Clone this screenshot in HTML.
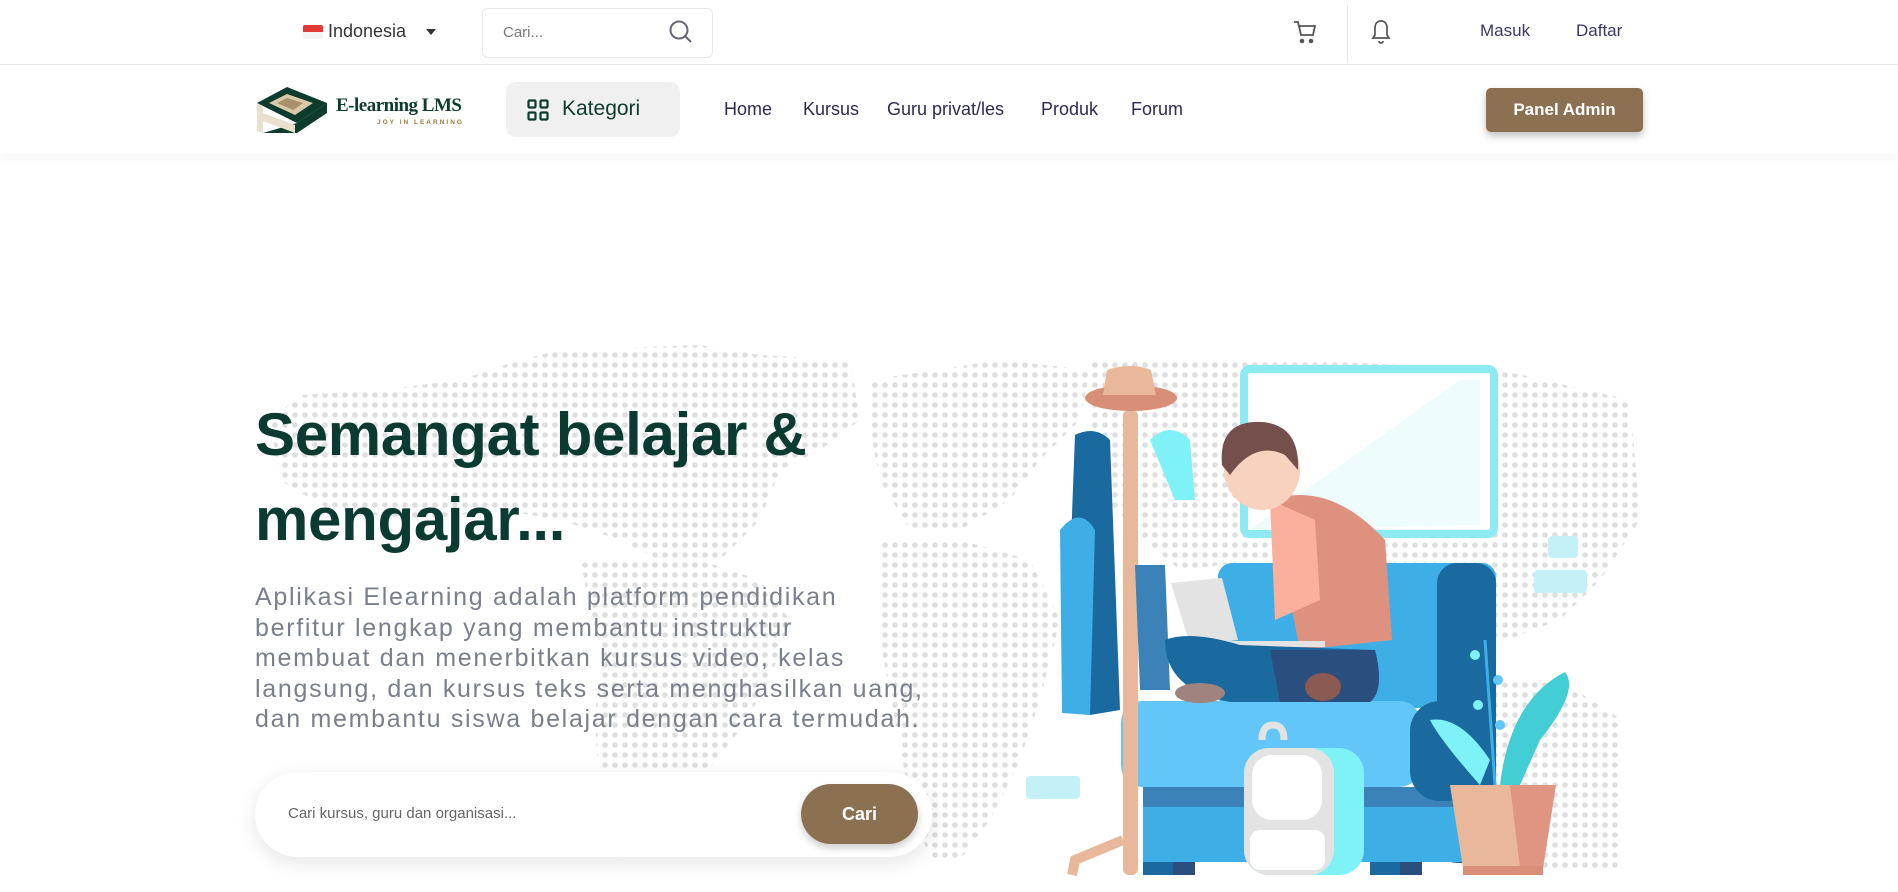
<!DOCTYPE html>
<html><head><meta charset="utf-8">
<style>
*{margin:0;padding:0;box-sizing:border-box}
body{width:1898px;height:892px;overflow:hidden;background:#fff;font-family:"Liberation Sans",sans-serif;position:relative}
.a{position:absolute}
.top{left:0;top:0;width:1898px;height:65px;border-bottom:1px solid #e6e6e6}
.nav{left:0;top:65px;width:1898px;height:89px;box-shadow:0 6px 10px rgba(0,0,0,0.03)}
.navlink{top:99px;font-size:18px;color:#2e2a52}
h1{position:absolute;left:255px;top:392px;font-size:60px;line-height:85px;color:#0b3b30;font-weight:700;letter-spacing:-0.3px}
.p{left:255px;top:582px;width:760px;font-size:25px;line-height:30.6px;color:#7a7f8c;letter-spacing:1.7px;white-space:nowrap}
</style></head><body>
<svg class="a" style="left:0;top:0" width="1898" height="892">
<defs>
<pattern id="d" width="10" height="10" patternUnits="userSpaceOnUse"><circle cx="5" cy="5" r="2.8" fill="#dedede"/></pattern>
</defs>
<g fill="url(#d)">
<polygon points="560,350 700,345 760,355 850,360 860,420 820,450 780,470 760,520 720,560 660,560 620,540 560,520 500,510 420,520 330,510 280,480 270,420 300,395 380,390 460,380 520,360"/>
<polygon points="580,560 700,560 760,580 790,620 770,680 740,730 700,780 660,830 620,860 600,800 595,720 600,650"/>
<polygon points="870,380 1000,360 1090,370 1080,420 1040,460 1010,500 960,530 910,530 880,480 870,430"/>
<polygon points="880,540 960,540 1030,560 1060,620 1040,700 1020,760 990,820 960,860 930,860 910,800 895,720 880,640"/>
<polygon points="1090,360 1300,360 1500,370 1630,400 1640,520 1600,580 1560,620 1480,650 1400,620 1330,580 1260,560 1180,570 1120,520 1090,460"/>
<polygon points="1460,680 1560,680 1622,720 1622,870 1480,870 1440,780"/>
</g>
</svg>

<div class="a top"></div>
<div class="a" style="left:303px;top:25px;width:20px;height:14px;background:linear-gradient(#e53935 50%,#f4f4f4 50%);border-radius:2px"></div>
<div class="a" style="left:328px;top:21px;font-size:18px;color:#333">Indonesia</div>
<div class="a" style="left:426px;top:29px;width:0;height:0;border-left:5px solid transparent;border-right:5px solid transparent;border-top:6px solid #333"></div>
<div class="a" style="left:482px;top:8px;width:231px;height:50px;border:1px solid #e8e8e8;border-radius:6px"></div>
<div class="a" style="left:503px;top:24px;font-size:15px;color:#777">Cari...</div>
<svg class="a" style="left:668px;top:19px" width="26" height="26" viewBox="0 0 26 26"><circle cx="11" cy="11" r="8.5" fill="none" stroke="#667" stroke-width="2"/><line x1="17.5" y1="17.5" x2="23" y2="23" stroke="#667" stroke-width="2"/></svg>
<svg class="a" style="left:1292px;top:19px" width="26" height="26" viewBox="0 0 26 26" fill="none" stroke="#555" stroke-width="1.8"><path d="M2 3h4l3 13h12l2-9H7"/><circle cx="10" cy="22" r="1.4" fill="#555"/><circle cx="19" cy="22" r="1.4" fill="#555"/></svg>
<div class="a" style="left:1347px;top:5px;width:1px;height:57px;background:#e6e6e6"></div>
<svg class="a" style="left:1370px;top:19px" width="22" height="26" viewBox="0 0 22 26" fill="none" stroke="#555" stroke-width="1.7"><path d="M11 2c-4 0-6 3-6 7v7l-2 3h16l-2-3V9c0-4-2-7-6-7z"/><path d="M9 22c0 1.5 1 2 2 2s2-.5 2-2"/></svg>
<div class="a" style="left:1480px;top:21px;font-size:17px;color:#3a3763">Masuk</div>
<div class="a" style="left:1576px;top:21px;font-size:17px;color:#3a3763">Daftar</div>

<div class="a nav"></div>
<svg class="a" style="left:255px;top:85px" width="80" height="50" viewBox="0 0 80 50"><polygon points="2,18 32,2 72,18 42,38" fill="#0d3b2e"/><polygon points="14,18 32,9 58,18 40,30" fill="#d9c9a8"/><polygon points="22,18 32,13 48,18 38,25" fill="#a8916b"/><polygon points="2,18 2,46 8,48 8,22" fill="#e8dfcc"/><polygon points="8,48 42,38 72,18 72,28 42,48" fill="#0d3b2e"/><polygon points="8,36 40,48 40,40 8,28" fill="#e8dfcc"/></svg>
<div class="a" style="left:336px;top:95px;font-family:'Liberation Serif',serif;font-weight:700;font-size:19px;color:#0d3b2e;letter-spacing:-0.5px">E-learning LMS</div>
<div class="a" style="left:377px;top:119px;font-size:6.5px;color:#a07a3a;letter-spacing:2px;font-weight:700">JOY IN LEARNING</div>
<div class="a" style="left:506px;top:82px;width:174px;height:55px;background:#f0f0f0;border-radius:10px"></div>
<svg class="a" style="left:527px;top:99px" width="22" height="22" viewBox="0 0 22 22" fill="none" stroke="#0d3b2e" stroke-width="2.2"><rect x="1.5" y="1.5" width="7" height="7" rx="1"/><rect x="13.5" y="1.5" width="7" height="7" rx="1"/><rect x="1.5" y="13.5" width="7" height="7" rx="1"/><rect x="13.5" y="13.5" width="7" height="7" rx="1"/></svg>
<div class="a" style="left:562px;top:97px;font-size:21px;color:#0d3b2e">Kategori</div>
<div class="a navlink" style="left:724px">Home</div>
<div class="a navlink" style="left:803px">Kursus</div>
<div class="a navlink" style="left:887px">Guru privat/les</div>
<div class="a navlink" style="left:1041px">Produk</div>
<div class="a navlink" style="left:1131px">Forum</div>
<div class="a" style="left:1486px;top:88px;width:157px;height:44px;background:#8b7152;border-radius:5px;box-shadow:0 4px 8px rgba(0,0,0,0.25);color:#fff;font-size:17px;font-weight:700;text-align:center;line-height:44px">Panel Admin</div>

<h1>Semangat belajar &amp;<br>mengajar...</h1>
<div class="a p">Aplikasi Elearning adalah platform pendidikan<br>berfitur lengkap yang membantu instruktur<br>membuat dan menerbitkan kursus video, kelas<br>langsung, dan kursus teks serta menghasilkan uang,<br>dan membantu siswa belajar dengan cara termudah.</div>

<div class="a" style="left:255px;top:772px;width:677px;height:85px;background:#fff;border-radius:43px;box-shadow:0 6px 20px rgba(0,0,0,0.1)"></div>
<div class="a" style="left:288px;top:805px;font-size:15px;color:#666">Cari kursus, guru dan organisasi...</div>
<div class="a" style="left:801px;top:784px;width:117px;height:60px;background:#8b7152;border-radius:30px;color:#fff;font-size:18px;font-weight:700;text-align:center;line-height:60px;box-shadow:0 4px 8px rgba(0,0,0,0.2)">Cari</div>

<svg class="a" style="left:0;top:0" width="1898" height="892">
<rect x="1026" y="776" width="54" height="23" rx="4" fill="#c4f1f7"/>
<rect x="1548" y="536" width="30" height="22" rx="4" fill="#c4f1f7"/>
<rect x="1534" y="570" width="53" height="23" rx="4" fill="#c4f1f7"/>
<rect x="1244" y="369" width="250" height="165" rx="6" fill="#fff" stroke="#8de9f2" stroke-width="8"/>
<polygon points="1250,530 1460,380 1480,380 1480,525" fill="#eefcfd"/>
<rect x="1218" y="563" width="278" height="145" rx="14" fill="#3eaee6"/>
<rect x="1437" y="563" width="59" height="300" rx="20" fill="#1a6aa0"/>
<rect x="1143" y="787" width="325" height="75" fill="#3eaee6"/>
<rect x="1143" y="787" width="325" height="20" fill="#3a82b8"/>
<rect x="1121" y="701" width="300" height="86" rx="22" fill="#62c6f8"/>
<rect x="1410" y="701" width="86" height="100" rx="30" fill="#1a6aa0"/>
<rect x="1143" y="862" width="30" height="13" fill="#1a6aa0"/><rect x="1173" y="862" width="22" height="13" fill="#2a4f7e"/>
<rect x="1370" y="862" width="30" height="13" fill="#1a6aa0"/><rect x="1400" y="862" width="22" height="13" fill="#2a4f7e"/>
<rect x="1123" y="410" width="15" height="465" rx="6" fill="#e9b89a"/>
<path d="M1123 840 L1075 860 L1072 875" stroke="#e9b89a" stroke-width="10" fill="none"/>
<ellipse cx="1131" cy="398" rx="46" ry="13" fill="#d98e78"/>
<path d="M1103 395 L1107 370 Q1131 362 1151 370 L1156 395 Z" fill="#e9b89a"/>
<path d="M1075 435 Q1095 425 1110 440 L1120 710 L1090 715 L1065 700 Z" fill="#1a6aa0"/>
<path d="M1060 530 Q1080 505 1095 530 L1090 715 L1062 713 Z" fill="#3eaee6"/>
<path d="M1150 440 Q1170 420 1190 440 L1195 500 L1175 500 Z" fill="#7ff2f8"/>
<path d="M1135 565 L1165 565 L1170 690 L1140 690 Z" fill="#3a82b8"/>
<path d="M1270 500 Q1330 480 1385 540 L1392 640 L1300 650 Z" fill="#df917f"/>
<path d="M1270 500 L1315 520 L1320 600 L1275 620 Z" fill="#fbb09e"/>
<ellipse cx="1262" cy="470" rx="38" ry="40" fill="#f7d3bf"/>
<path d="M1222 465 Q1218 420 1262 422 Q1300 425 1298 470 L1285 455 Q1255 440 1230 475 Z" fill="#754f4b"/>
<polygon points="1171,583 1222,578 1238,640 1190,645" fill="#e3e3e3"/>
<rect x="1185" y="641" width="140" height="6" fill="#e3e3e3"/>
<path d="M1165 640 Q1190 630 1240 645 L1375 650 Q1385 690 1370 702 L1230 702 Q1165 690 1165 640 Z" fill="#1a6aa0"/>
<path d="M1270 650 L1375 650 Q1385 690 1370 702 L1280 702 Z" fill="#2a4f7e"/>
<ellipse cx="1200" cy="693" rx="25" ry="10" fill="#a0827e"/>
<ellipse cx="1323" cy="687" rx="18" ry="14" fill="#8b5a50"/>
<path d="M1262 740 Q1262 725 1273 725 Q1284 725 1284 740" stroke="#e3e3e3" stroke-width="7" fill="none"/>
<rect x="1244" y="748" width="120" height="127" rx="25" fill="#7ff2f8"/>
<rect x="1244" y="748" width="90" height="127" rx="25" fill="#e3e3e3"/>
<rect x="1252" y="755" width="70" height="65" rx="20" fill="#fff"/>
<rect x="1250" y="830" width="75" height="40" rx="10" fill="#fff"/>
<path d="M1500 785 Q1510 700 1565 672 Q1580 690 1540 740 L1520 785 Z" fill="#43cdd4"/>
<path d="M1480 785 Q1440 740 1430 720 Q1460 715 1490 760 Z" fill="#7ff2f8"/>
<path d="M1485 640 L1495 785" stroke="#3eaee6" stroke-width="3"/>
<circle cx="1475" cy="655" r="5" fill="#7ff2f8"/><circle cx="1498" cy="680" r="5" fill="#62c6f8"/><circle cx="1478" cy="705" r="5" fill="#7ff2f8"/><circle cx="1500" cy="725" r="5" fill="#62c6f8"/>
<polygon points="1450,785 1556,785 1543,868 1463,868" fill="#e9b89a"/>
<polygon points="1510,785 1556,785 1543,868 1520,868" fill="#e09582"/>
<rect x="1463" y="866" width="80" height="9" fill="#d98e78"/>
</svg>
</body></html>
